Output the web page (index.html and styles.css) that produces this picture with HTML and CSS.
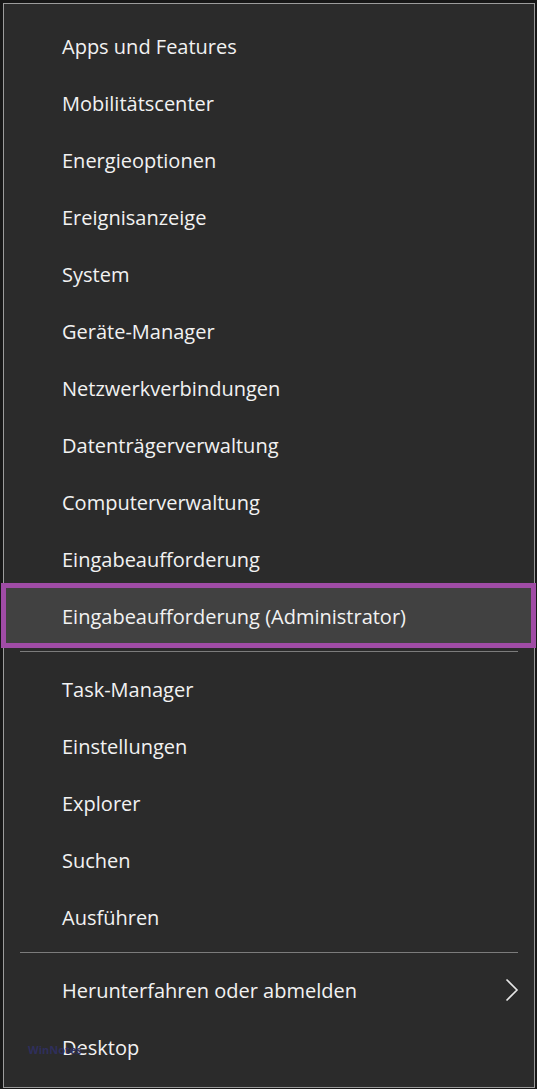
FILE: index.html
```html
<!DOCTYPE html>
<html lang="de">
<head>
<meta charset="utf-8">
<title>Win+X Menü</title>
<link rel="stylesheet" href="styles.css">
</head>
<body>
<nav class="menu">
  <ul class="group">
    <li class="item">Apps und Features</li>
    <li class="item">Mobilitätscenter</li>
    <li class="item">Energieoptionen</li>
    <li class="item">Ereignisanzeige</li>
    <li class="item">System</li>
    <li class="item">Geräte-Manager</li>
    <li class="item">Netzwerkverbindungen</li>
    <li class="item">Datenträgerverwaltung</li>
    <li class="item">Computerverwaltung</li>
    <li class="item">Eingabeaufforderung</li>
    <li class="item item-active">Eingabeaufforderung (Administrator)</li>
  </ul>
  <hr class="sep">
  <ul class="group">
    <li class="item">Task-Manager</li>
    <li class="item">Einstellungen</li>
    <li class="item">Explorer</li>
    <li class="item">Suchen</li>
    <li class="item">Ausführen</li>
  </ul>
  <hr class="sep">
  <ul class="group">
    <li class="item item-sub">Herunterfahren oder abmelden
      <svg class="chevron" width="14" height="24" viewBox="0 0 14 24" aria-hidden="true"><polyline points="1.5,1.5 12,12 1.5,22.5" fill="none" stroke="#e6e6e6" stroke-width="1.6"/></svg>
    </li>
    <li class="item item-wm"><span class="watermark">WinNotes</span>Desktop</li>
  </ul>
</nav>
</body>
</html>
```
FILE: styles.css
```css
html, body {
  margin: 0;
  padding: 0;
}
body {
  background: #171717;
  width: 537px;
  height: 1089px;
  overflow: hidden;
  font-family: "Open Sans", "Noto Sans", "Liberation Sans", sans-serif;
}
.menu {
  margin: 3px 0 0 3px;
  width: 532px;
  box-sizing: border-box;
  border: 1px solid #9c9c9c;
  background: #2b2b2b;
  padding: 14px 0 11px;
}
.group {
  list-style: none;
  margin: 0;
  padding: 0;
}
.item {
  position: relative;
  display: flex;
  align-items: center;
  height: 57px;
  padding-left: 58px;
  color: #f2f2f2;
  font-size: 20px;
}
.item-active {
  background: #414141;
}
.item-active::after {
  content: "";
  position: absolute;
  top: -5px;
  bottom: -3px;
  left: -3px;
  right: -2px;
  border: 5px solid #a04ca6;
}
.item-sub .chevron {
  position: absolute;
  right: 15px;
  top: 16px;
}
.sep {
  margin: 6px 16px 9px;
  border: 0;
  height: 1px;
  background: #7c7c7c;
}
.watermark {
  position: absolute;
  left: 24px;
  top: 23px;
  font-size: 11px;
  font-weight: bold;
  color: #2f2f5c;
}
```
